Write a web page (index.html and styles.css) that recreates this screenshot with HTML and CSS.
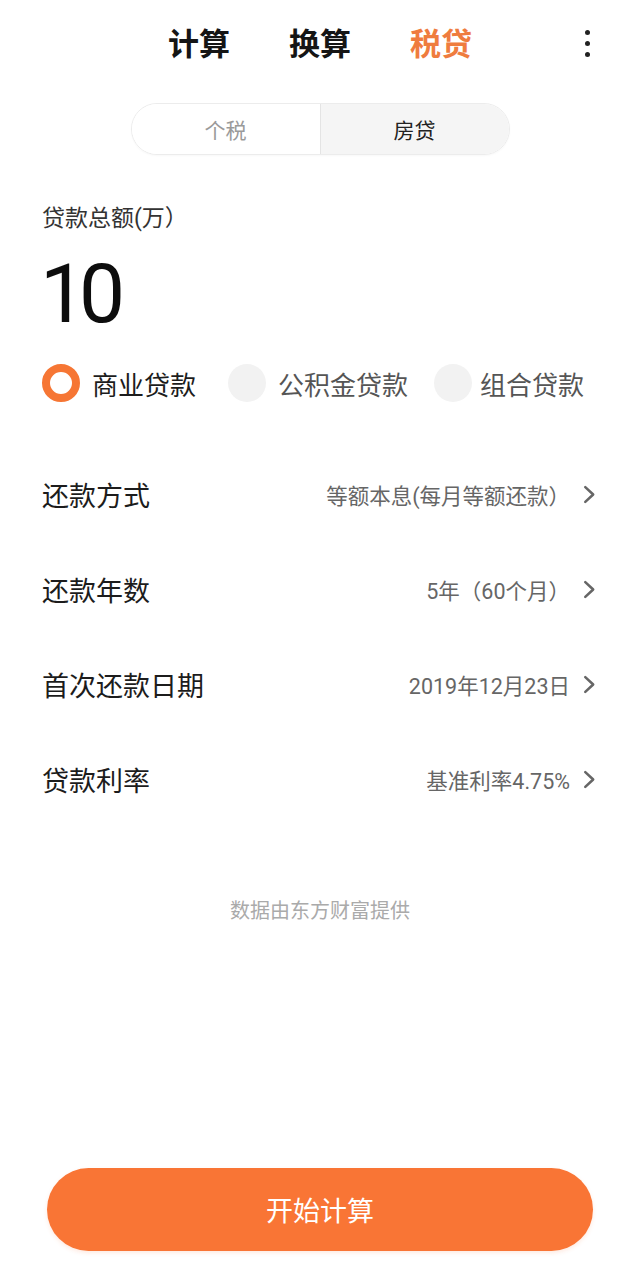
FILE: index.html
```html
<!DOCTYPE html>
<html lang="zh-CN">
<head>
<meta charset="utf-8">
<title>税贷</title>
<link rel="stylesheet" href="styles.css">
</head>
<body>
<div class="page">
  <header class="topbar">
    <div class="side"></div>
    <nav class="tabs">
      <span class="tab">计算</span>
      <span class="tab">换算</span>
      <span class="tab active">税贷</span>
    </nav>
    <div class="side right">
      <span class="more"><i></i><i></i><i></i></span>
    </div>
  </header>

  <div class="segment">
    <span class="seg">个税</span>
    <span class="seg on">房贷</span>
  </div>

  <section class="amount">
    <div class="amount-label">贷款总额(万）</div>
    <div class="amount-value">10</div>
  </section>

  <div class="radios">
    <label class="radio"><span class="dot checked"></span><span>商业贷款</span></label>
    <label class="radio"><span class="dot"></span><span>公积金贷款</span></label>
    <label class="radio last"><span class="dot"></span><span>组合贷款</span></label>
  </div>

  <ul class="rows">
    <li class="row"><span class="row-label">还款方式</span><span class="row-value">等额本息(每月等额还款）<svg class="chev" viewBox="0 0 12 18"><path d="M2 2l7.5 7L2 16"/></svg></span></li>
    <li class="row"><span class="row-label">还款年数</span><span class="row-value">5年（60个月）<svg class="chev" viewBox="0 0 12 18"><path d="M2 2l7.5 7L2 16"/></svg></span></li>
    <li class="row"><span class="row-label">首次还款日期</span><span class="row-value">2019年12月23日<svg class="chev" viewBox="0 0 12 18"><path d="M2 2l7.5 7L2 16"/></svg></span></li>
    <li class="row"><span class="row-label">贷款利率</span><span class="row-value">基准利率4.75%<svg class="chev" viewBox="0 0 12 18"><path d="M2 2l7.5 7L2 16"/></svg></span></li>
  </ul>

  <p class="source">数据由东方财富提供</p>

  <div class="spacer"></div>

  <button class="start">开始计算</button>
</div>
</body>
</html>
```
FILE: styles.css
```css
* { box-sizing: border-box; }
html, body { margin: 0; padding: 0; background: #fff; }
body {
  font-family: "Roboto", "Noto Sans CJK SC", sans-serif;
  color: #1c1c1c;
}
.page {
  width: 640px;
  height: 1275px;
  display: flex;
  flex-direction: column;
}
.topbar {
  height: 88px;
  display: grid;
  grid-template-columns: 1fr auto 1fr;
  align-items: center;
}
.tabs {
  display: flex;
  gap: 59px;
}
.tab {
  font-size: 31px;
  font-weight: 700;
  color: #151515;
  line-height: 1;
}
.tab.active { color: #ef7c3e; }
.side.right {
  display: flex;
  justify-content: flex-end;
  padding-right: 50px;
}
.more {
  display: flex;
  flex-direction: column;
  gap: 6px;
  padding-bottom: 2px;
}
.more i {
  display: block;
  width: 5px;
  height: 5px;
  border-radius: 50%;
  background: #222;
}
.segment {
  margin: 15px auto 0;
  width: 379px;
  height: 52px;
  border: 1px solid #ececec;
  border-radius: 26px;
  display: flex;
  overflow: hidden;
  box-shadow: 0 1px 2px rgba(0,0,0,0.03);
}
.seg {
  flex: 1;
  display: flex;
  align-items: center;
  justify-content: center;
  font-size: 21px;
  color: #9a9a9a;
  background: #fff;
}
.seg.on {
  background: #f5f5f5;
  color: #222;
  border-left: 1px solid #e4e4e4;
}
.amount {
  padding: 50px 42px 0;
}
.amount-label {
  font-size: 23px;
  line-height: 28px;
  color: #333;
}
.amount-value {
  margin-top: 20px;
  font-size: 82px;
  line-height: 1;
  color: #0d0d0d;
  letter-spacing: -7px;
  margin-left: -2px;
}
.radios {
  margin-top: 29px;
  padding: 0 42px;
  display: flex;
  gap: 32px;
  height: 38px;
}
.radio {
  display: flex;
  align-items: center;
  gap: 12px;
  font-size: 26px;
  color: #555;
}
.radio.last {
  margin-left: -6px;
  gap: 8px;
}
.radio:first-child { color: #1c1c1c; }
.dot {
  width: 38px;
  height: 38px;
  border-radius: 50%;
  background: #f2f2f2;
  flex: none;
}
.dot.checked {
  background: #fff;
  border: 8px solid #f67634;
}
.rows {
  list-style: none;
  margin: 45px 0 0;
  padding: 0;
}
.row {
  height: 95px;
  display: flex;
  align-items: center;
  justify-content: space-between;
  padding: 0 44px 0 42px;
}
.row-label {
  font-size: 27px;
  color: #1c1c1c;
}
.row-value {
  display: flex;
  align-items: center;
  font-size: 21.5px;
  color: #666;
}
.chev {
  width: 13px;
  height: 19px;
  margin-left: 13px;
  fill: none;
  stroke: #666;
  stroke-width: 2.4;
  stroke-linecap: round;
  stroke-linejoin: round;
}
.source {
  margin: 71px 0 0;
  text-align: center;
  font-size: 20px;
  line-height: 26px;
  color: #aaa;
}
.spacer { flex: 1; }
.start {
  margin: 0 47px 24px;
  height: 83px;
  border: none;
  border-radius: 42px;
  background: #f97535;
  color: #fff;
  font-family: "Noto Sans CJK SC", sans-serif;
  font-size: 27px;
  box-shadow: 0 2px 4px rgba(249,117,53,0.15);
}
```
